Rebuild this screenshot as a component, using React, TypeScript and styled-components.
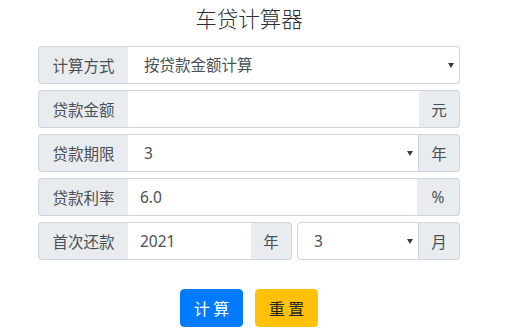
import React from "react";
import styled, { createGlobalStyle } from "styled-components";

const Global = createGlobalStyle`
  html, body { margin: 0; padding: 0; background: #fff; }
  body {
    font-family: "Segoe UI", "Noto Sans", "Noto Sans CJK SC", sans-serif;
    color: #212529;
  }
  * { box-sizing: border-box; }
`;

const Page = styled.div`
  width: 422px;
  margin-left: 38px;
  padding-top: 5px;
`;

const Title = styled.h4`
  margin: 0 0 15px;
  font-size: 21.5px;
  line-height: 26px;
  font-weight: 300;
  text-align: center;
  color: #2b2f33;
  font-family: "Noto Sans CJK SC", sans-serif;
`;

const Form = styled.div`
  display: flex;
  flex-direction: column;
  gap: 6px;
`;

const Group = styled.div`
  display: flex;
  height: 38px;
  width: 100%;
`;

const Addon = styled.span<{ $w: number; $first?: boolean; $last?: boolean }>`
  flex: 0 0 ${(p) => p.$w}px;
  display: flex;
  align-items: center;
  justify-content: center;
  background: #e9ecef;
  border: 1px solid #ced4da;
  color: #495057;
  font-size: 15.5px;
  font-family: "Noto Sans", "Noto Sans CJK SC", sans-serif;
  border-radius: ${(p) =>
    p.$first ? "4px 0 0 4px" : p.$last ? "0 4px 4px 0" : "0"};
  ${(p) => (p.$first ? "border-right: none;" : "")}
  ${(p) => (p.$last ? "border-left: none;" : "")}
`;

const Input = styled.input<{ $right?: boolean; $w?: number }>`
  ${(p) => (p.$w ? `flex: 0 0 ${p.$w}px;` : "flex: 1 1 auto;")}
  min-width: 0;
  height: 38px;
  border: 1px solid #ced4da;
  border-left: none;
  ${(p) => (p.$right ? "border-right: none;" : "")}
  border-radius: ${(p) => (p.$right ? "0" : "0 4px 4px 0")};
  padding: 0 12px;
  font-size: 15.5px;
  color: #495057;
  font-family: "Noto Sans", "Noto Sans CJK SC", sans-serif;
  outline: none;
  background: #fff;
`;

const SelectWrap = styled.div<{ $w?: number; $gapLeft?: boolean }>`
  position: relative;
  ${(p) => (p.$w ? `flex: 0 0 ${p.$w}px;` : "flex: 1 1 auto;")}
  min-width: 0;
  ${(p) => (p.$gapLeft ? "margin-left: 5px;" : "")}
  &::after {
    content: "";
    position: absolute;
    right: 6px;
    top: 17px;
    border-left: 3.5px solid transparent;
    border-right: 3.5px solid transparent;
    border-top: 5px solid #343a40;
    pointer-events: none;
  }
`;

const Select = styled.select<{ $closed?: boolean; $gapLeft?: boolean }>`
  appearance: none;
  -webkit-appearance: none;
  width: 100%;
  height: 38px;
  border: 1px solid #ced4da;
  ${(p) => (p.$gapLeft ? "" : "border-left: none;")}
  border-radius: ${(p) => (p.$closed ? "0 4px 4px 0" : p.$gapLeft ? "4px 0 0 4px" : "0")};
  padding: 0 20px 0 16px;
  font-size: 15.5px;
  color: #495057;
  font-family: "Noto Sans", "Noto Sans CJK SC", sans-serif;
  background: #fff;
  outline: none;
`;

const Actions = styled.div`
  display: flex;
  justify-content: center;
  gap: 12px;
  margin-top: 29px;
`;

const Button = styled.button<{ $variant: "primary" | "warning" }>`
  height: 38px;
  padding: 0 12px;
  width: 63px;
  border: 1px solid ${(p) => (p.$variant === "primary" ? "#007bff" : "#ffc107")};
  background: ${(p) => (p.$variant === "primary" ? "#007bff" : "#ffc107")};
  color: ${(p) => (p.$variant === "primary" ? "#fff" : "#212529")};
  border-radius: 4px;
  font-size: 16px;
  font-family: "Noto Sans CJK SC", sans-serif;
  white-space: pre;
  cursor: pointer;
`;

export default function App() {
  return (
    <>
      <Global />
      <Page>
        <Title>车贷计算器</Title>
        <Form>
          <Group>
            <Addon $w={90} $first>计算方式</Addon>
            <SelectWrap>
              <Select $closed defaultValue="amount">
                <option value="amount">按贷款金额计算</option>
                <option value="price">按车价计算</option>
              </Select>
            </SelectWrap>
          </Group>
          <Group>
            <Addon $w={90} $first>贷款金额</Addon>
            <Input $right defaultValue="" />
            <Addon $w={41} $last>元</Addon>
          </Group>
          <Group>
            <Addon $w={90} $first>贷款期限</Addon>
            <SelectWrap>
              <Select defaultValue="3">
                <option value="1">1</option>
                <option value="2">2</option>
                <option value="3">3</option>
                <option value="4">4</option>
                <option value="5">5</option>
              </Select>
            </SelectWrap>
            <Addon $w={41} $last>年</Addon>
          </Group>
          <Group>
            <Addon $w={90} $first>贷款利率</Addon>
            <Input $right defaultValue="6.0" />
            <Addon $w={43} $last>%</Addon>
          </Group>
          <Group>
            <Addon $w={90} $first>首次还款</Addon>
            <Input $right $w={123} defaultValue="2021" />
            <Addon $w={41} $last>年</Addon>
            <SelectWrap $gapLeft>
              <Select $gapLeft defaultValue="3">
                {Array.from({ length: 12 }, (_, i) => (
                  <option key={i} value={String(i + 1)}>
                    {i + 1}
                  </option>
                ))}
              </Select>
            </SelectWrap>
            <Addon $w={41} $last>月</Addon>
          </Group>
        </Form>
        <Actions>
          <Button $variant="primary">计 算</Button>
          <Button $variant="warning">重 置</Button>
        </Actions>
      </Page>
    </>
  );
}
